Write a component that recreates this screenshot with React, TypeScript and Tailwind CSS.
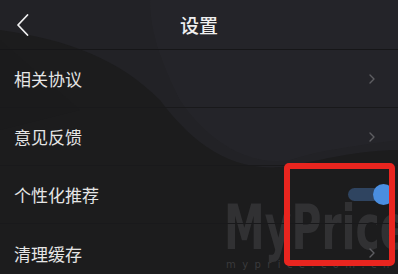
import React from "react";

function Chevron() {
  return (
    <svg width="8" height="12" viewBox="0 0 8 12" fill="none">
      <path d="M2 2 L6 6 L2 10" stroke="#5e5e62" strokeWidth="1.4" strokeLinecap="round" strokeLinejoin="round" />
    </svg>
  );
}

function Row({ label, right, divider = true }: { label: string; right: React.ReactNode; divider?: boolean }) {
  return (
    <div className={`flex h-[58px] shrink-0 items-center justify-between pl-[14px] pr-[22px] ${divider ? "border-b border-[#19191b]" : ""}`}>
      <span className="text-[17px] leading-none text-[#e6e6e6]">{label}</span>
      {right}
    </div>
  );
}

export default function App() {
  return (
    <div
      className="relative h-[274px] w-[398px] overflow-hidden bg-[#1d1d1f]"
      style={{ fontFamily: '"Noto Sans CJK SC", "Noto Sans", sans-serif' }}
    >
      {/* decorative background */}
      <svg className="absolute inset-0" width="398" height="274" viewBox="0 0 398 274">
        <rect x="0" y="0" width="398" height="274" fill="#1c1c1d" />
        <path d="M0 0 H398 V150 C360 150 320 160 290 166 C230 175 190 140 160 100 C120 60 70 40 0 30 Z" fill="#222226" />
        <path d="M150 0 H398 V140 C360 145 320 150 290 160 C240 168 200 130 180 100 C160 60 150 30 150 0 Z" fill="#27272b" opacity="0.6" />
        <path d="M0 40 L80 110 L0 130 Z" fill="#1a1a1b" opacity="0.5" />
      </svg>

      {/* watermark */}
      <div className="pointer-events-none absolute left-[224px] top-[205px] origin-left scale-x-[0.66] whitespace-nowrap text-[62px] font-bold leading-[46px] text-[#313133]" style={{ fontFamily: '"DejaVu Sans", sans-serif' }}>
        MyPrice
      </div>
      <div className="pointer-events-none absolute left-[226px] top-[260px] whitespace-nowrap text-[10px] leading-none tracking-[6.4px] text-[#3a3a3c]" style={{ fontFamily: '"DejaVu Sans", sans-serif' }}>
        myprice.com.cn
      </div>

      <div className="relative flex flex-col">
        {/* header */}
        <div className="grid h-[50px] shrink-0 grid-cols-[1fr_auto_1fr] items-center border-b border-[#161618]">
          <div className="pl-[16px]">
            <svg width="14" height="24" viewBox="0 0 14 24" fill="none">
              <path d="M11.5 2 L2 12 L11.5 22" stroke="#f0f0f0" strokeWidth="1.8" strokeLinecap="round" strokeLinejoin="round" />
            </svg>
          </div>
          <span className="text-[19px] font-medium leading-none text-[#efefef]">设置</span>
          <div />
        </div>
        <Row label="相关协议" right={<Chevron />} />
        <Row label="意见反馈" right={<Chevron />} />
        <Row
          label="个性化推荐"
          right={
            <div className="relative mr-[-14px] h-[13px] w-[42px] rounded-full bg-[#2f4460]">
              <div className="absolute right-[-4px] top-[-4px] h-[21px] w-[21px] rounded-full bg-[#4a8ee0]" />
            </div>
          }
        />
        <Row label="清理缓存" right={<Chevron />} divider={false} />
      </div>

      {/* red highlight box */}
      <div className="pointer-events-none absolute left-[284px] top-[163px] h-[103px] w-[111px] rounded-[5px] border-[6px] border-[#e9251f]" />
    </div>
  );
}
